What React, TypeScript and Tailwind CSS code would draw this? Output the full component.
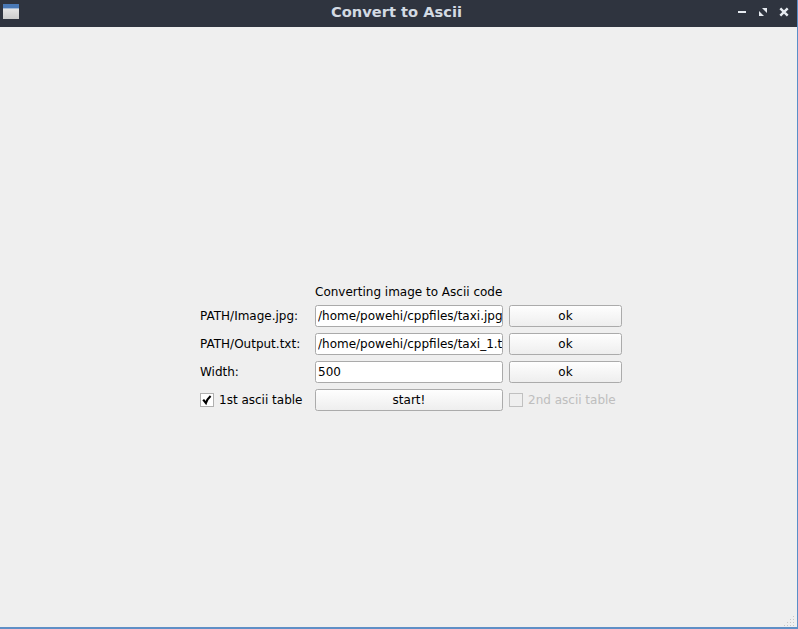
import type { ReactNode } from "react";

function Field({ value }: { value: string }) {
  return (
    <input
      className="block h-[22px] w-full min-w-0 rounded-[2.5px] border border-[#aaaaaa] bg-white pl-[2px] outline-none"
      defaultValue={value}
    />
  );
}

function Button({ children }: { children: ReactNode }) {
  return (
    <button className="flex h-[22px] items-center justify-center rounded-[2.5px] border border-[#ababab] bg-linear-to-b from-[#fefefe] to-[#eeeeee]">
      {children}
    </button>
  );
}

function Check({ label, checked, disabled }: { label: string; checked?: boolean; disabled?: boolean }) {
  return (
    <label className={`flex h-[22px] items-center gap-[5px] whitespace-nowrap ${disabled ? "text-[#bebebe]" : ""}`}>
      <span className={`flex size-[14px] shrink-0 items-center justify-center border ${disabled ? "border-[#c0c0c0] bg-[#efefef]" : "border-[#b0b0b0] bg-white"}`}>
        {checked && (
          <svg width="12" height="12" viewBox="0 0 12 12" fill="none" stroke="#000" strokeWidth="2.2">
            <path d="M2.2 5.6 L4.9 9 Q6.2 5 9.6 2" />
          </svg>
        )}
      </span>
      {label}
    </label>
  );
}

export default function App() {
  return (
    <div className="flex h-[629px] w-[798px] flex-col overflow-hidden border-r border-b-2 border-r-[#5a8fc8] border-b-[#5f8fc6] bg-[#efefef] font-['DejaVu_Sans',sans-serif] text-[12px] leading-[14px] text-black">
      <header className="flex h-[27px] shrink-0 items-start justify-between bg-[#2f343f] pr-[7px] pl-[3px]">
        <svg className="mt-1" width="56" height="16" viewBox="0 0 56 16">
          <defs>
            <linearGradient id="pane" x1="0" y1="0" x2="0" y2="1">
              <stop offset="0" stopColor="#f2f2f2" />
              <stop offset="1" stopColor="#cccccc" />
            </linearGradient>
          </defs>
          <rect width="16" height="15" fill="url(#pane)" />
          <rect width="16" height="4" fill="#4a7ab8" />
          <rect y="4" width="16" height="1" fill="#a5bbd8" />
        </svg>
        <h1 className="mt-1 text-[14.67px] leading-[16px] font-bold text-[#d3dae3]">Convert to Ascii</h1>
        <svg className="mt-[5px]" width="56" height="14" viewBox="0 0 56 14">
          <rect x="4" y="6" width="8" height="2" fill="#e6eaf0" />
          <path d="M28 3h5v5zM25 6v5h5z" fill="#e6eaf0" />
          <path d="M46.3 3.3l7.4 7.4M53.7 3.3l-7.4 7.4" stroke="#e6eaf0" strokeWidth="2.4" />
        </svg>
      </header>
      <main className="flex grow flex-col pt-[258px] pl-[200px]">
        <div className="grid w-[422px] grid-cols-[109px_188px_113px] items-center gap-[6px]">
          <div className="col-start-2 whitespace-nowrap">Converting image to Ascii code</div>
          <div className="col-start-1">PATH/Image.jpg:</div>
          <Field value="/home/powehi/cppfiles/taxi.jpg" />
          <Button>ok</Button>
          <div>PATH/Output.txt:</div>
          <Field value="/home/powehi/cppfiles/taxi_1.txt" />
          <Button>ok</Button>
          <div>Width:</div>
          <Field value="500" />
          <Button>ok</Button>
          <Check label="1st ascii table" checked />
          <Button>start!</Button>
          <Check label="2nd ascii table" disabled />
        </div>
        <svg className="mt-auto mr-[1px] self-end" width="12" height="12" viewBox="0 0 12 12" fill="#c6c6c6">
          <path d="M9 1h1v1h-1zM6 4h1v1h-1zM9 4h1v1h-1zM3 7h1v1h-1zM6 7h1v1h-1zM9 7h1v1h-1zM0 10h1v1h-1zM3 10h1v1h-1zM6 10h1v1h-1zM9 10h1v1h-1z" />
        </svg>
      </main>
    </div>
  );
}
